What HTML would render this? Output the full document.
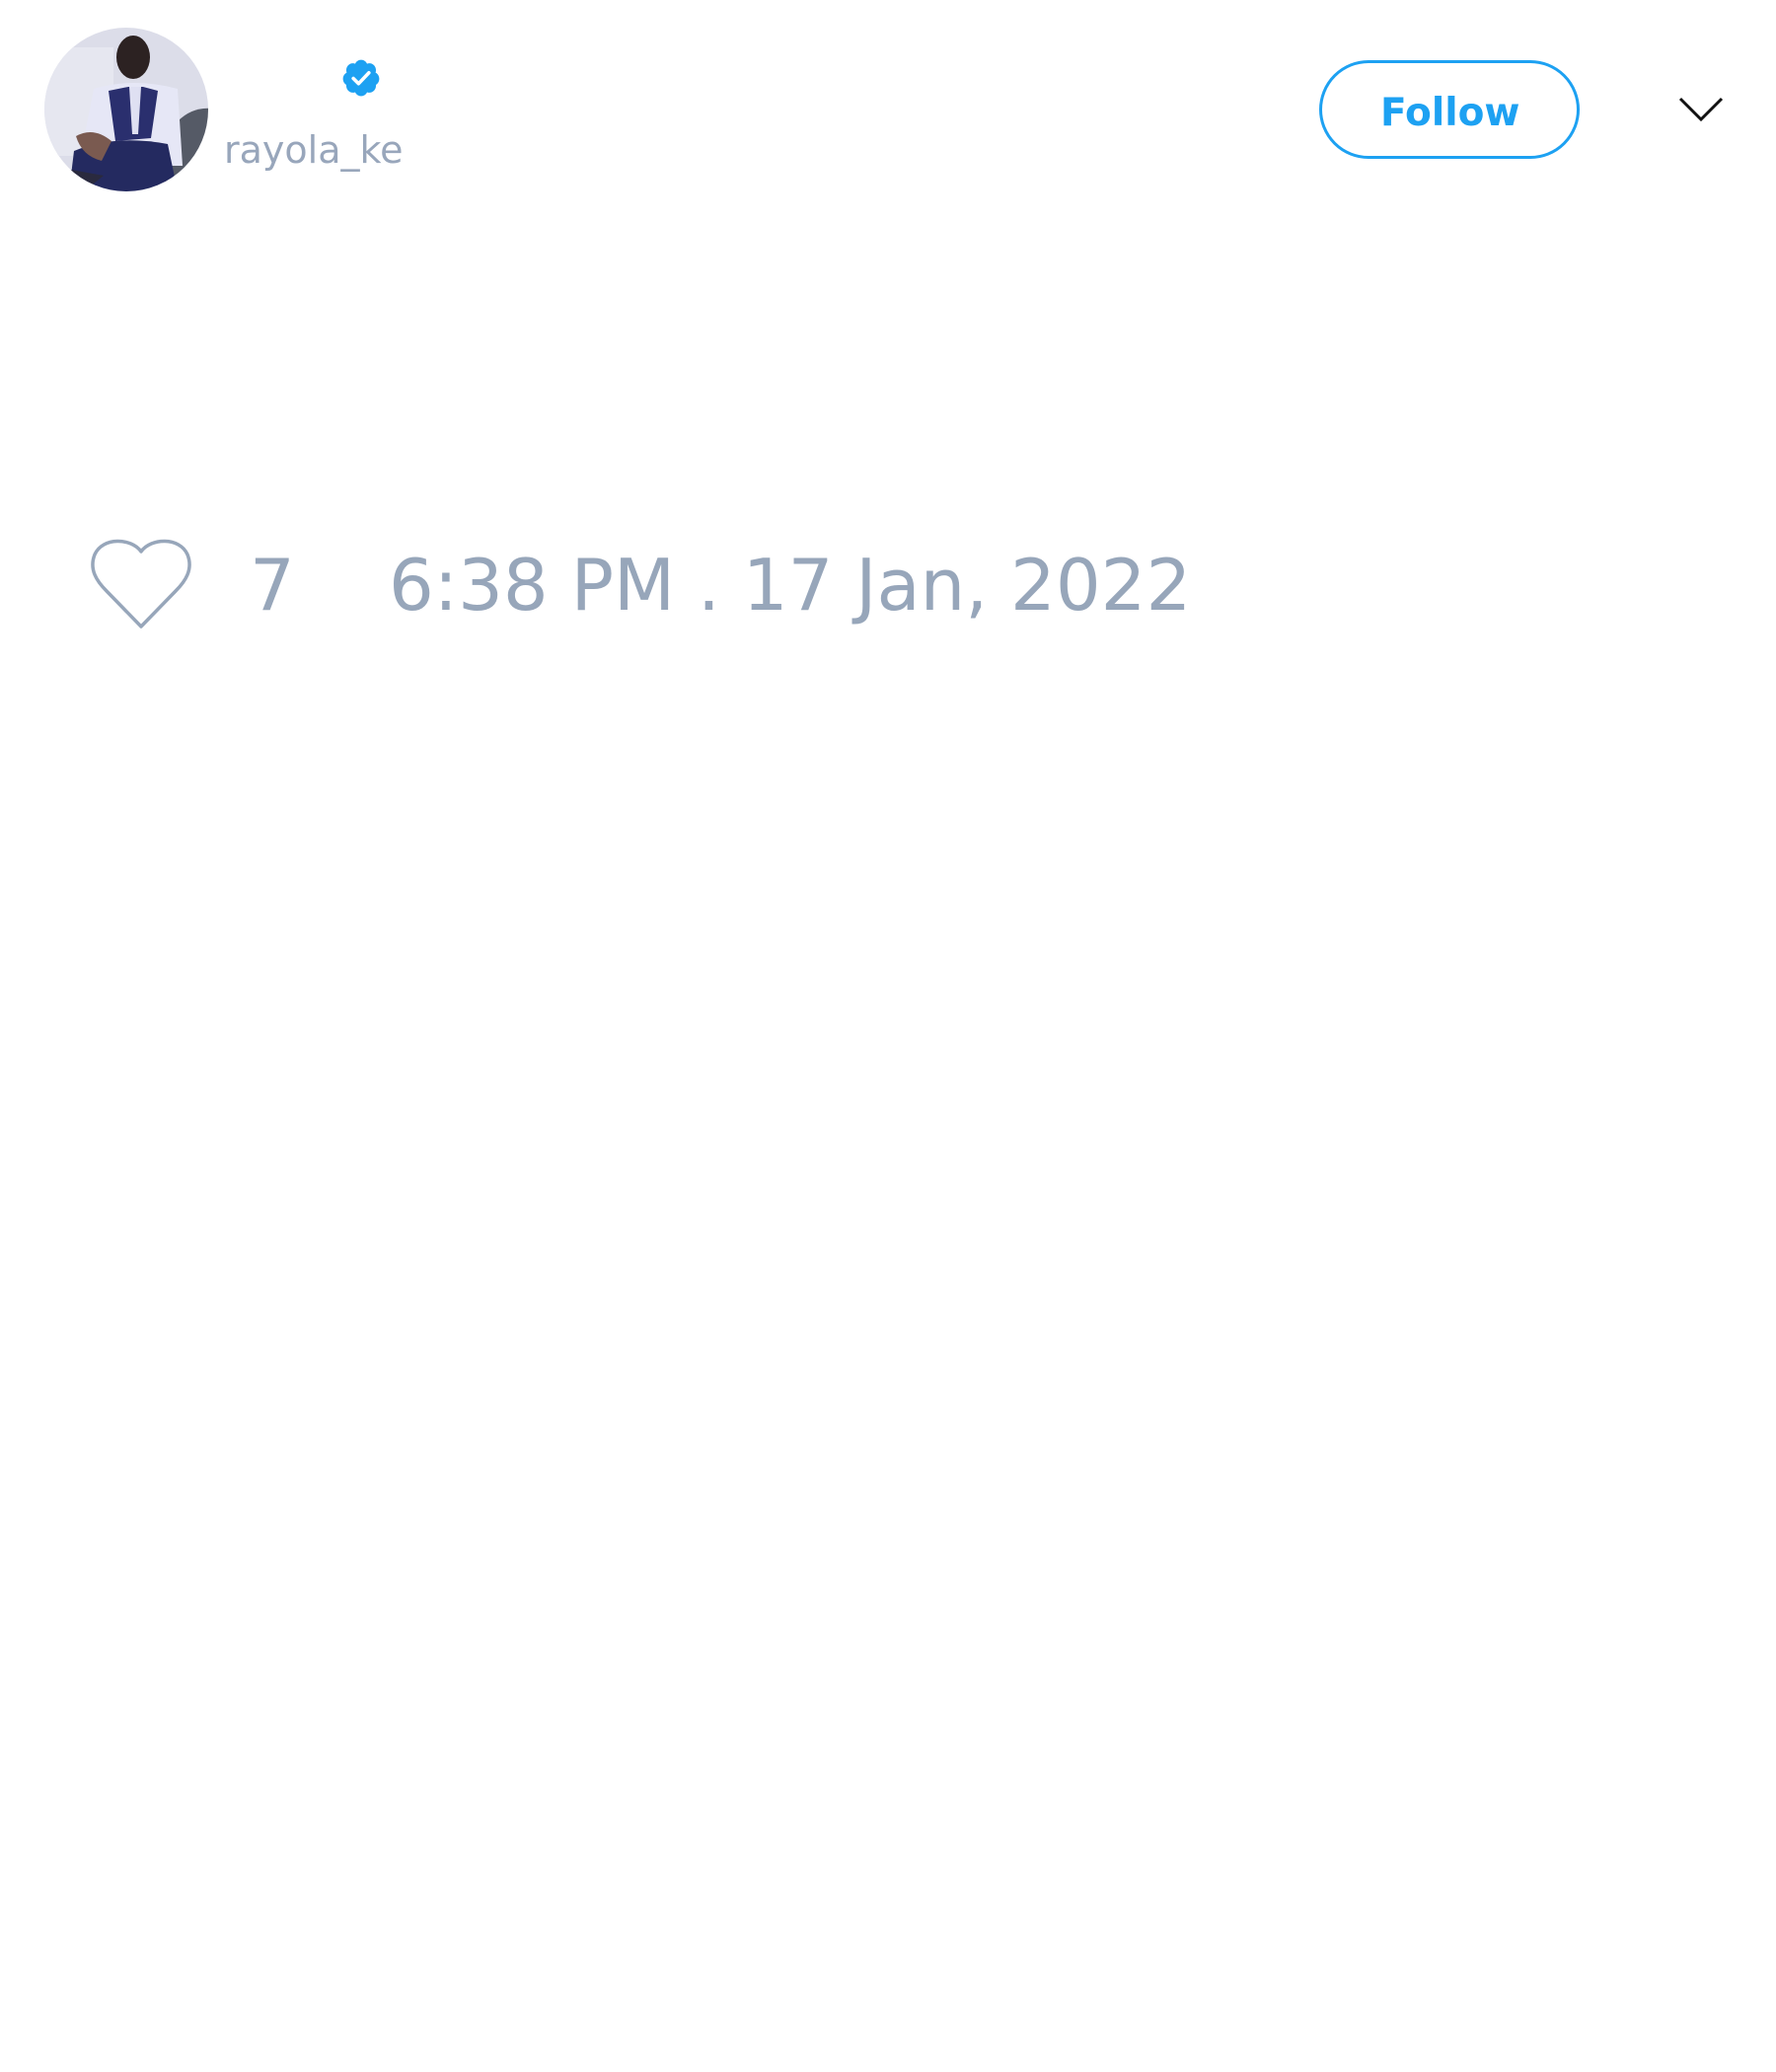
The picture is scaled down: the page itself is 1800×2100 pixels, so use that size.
<!DOCTYPE html>
<html><head><meta charset="utf-8"><style>
html,body{margin:0;padding:0;background:#fff;width:1800px;height:2100px;overflow:hidden;position:relative}
.a{position:absolute}
.u{font-family:"DejaVu Sans",sans-serif;color:#98a6bb;font-size:38px;line-height:1;white-space:nowrap}
.t{font-family:"DejaVu Sans",sans-serif;color:#97a6ba;font-size:72px;line-height:1;white-space:nowrap}
.btn{left:1337px;top:61px;width:258px;height:94px;border:3px solid #1da1f2;border-radius:50px;box-sizing:content-box}
.bt{font-family:"DejaVu Sans",sans-serif;font-weight:bold;color:#1da1f2;font-size:39px;line-height:1;left:1399px;top:95px;white-space:nowrap}
</style></head><body>
<svg class="a" style="left:45px;top:28px" width="166" height="166" viewBox="0 0 166 166">
<defs><clipPath id="c"><circle cx="83" cy="83" r="83"/></clipPath></defs>
<g clip-path="url(#c)">
<rect width="166" height="166" fill="#dcdde9"/>
<rect x="0" y="20" width="70" height="110" fill="#e6e7f0"/>
<path d="M135 95 Q150 80 170 82 L170 166 L120 166Z" fill="#555a66"/>
<ellipse cx="90" cy="30" rx="17" ry="22" fill="#2c2222"/>
<path d="M50 62 Q90 50 135 62 L140 140 L35 140 Z" fill="#e6e7f6"/>
<path d="M65 64 L85 60 L100 60 L115 64 L108 112 L72 115 Z" fill="#2a2f6e"/>
<path d="M86 60 L98 60 L95 108 L89 108 Z" fill="#dfe0f2"/>
<path d="M30 125 Q70 108 125 118 L135 166 L25 166 Z" fill="#242a60"/>
<path d="M32 110 Q50 100 68 115 L58 135 Q38 130 32 110Z" fill="#7a5a50"/>
<path d="M5 140 L60 150 L40 166 L5 166Z" fill="#2a2a3e"/>
</g></svg>
<svg class="a" style="left:345px;top:58px" width="42" height="42" viewBox="0 0 24 24">
<path fill="#1da1f2" d="M22.5 12.5c0-1.580-.875-2.950-2.148-3.600.154-.435.238-.905.238-1.400 0-2.210-1.710-3.998-3.818-3.998-.470 0-.920.084-1.336.250C14.818 2.415 13.510 1.500 12 1.500s-2.816.917-3.437 2.250c-.415-.165-.866-.250-1.336-.250-2.110 0-3.818 1.790-3.818 4 0 .494.083.964.237 1.400-1.272.650-2.147 2.018-2.147 3.600 0 1.495.782 2.798 1.942 3.486-.020.170-.032.340-.032.514 0 2.210 1.708 4 3.818 4 .470 0 .920-.086 1.335-.250.620 1.334 1.926 2.250 3.437 2.250 1.512 0 2.818-.916 3.437-2.250.415.163.865.248 1.336.248 2.110 0 3.818-1.790 3.818-4 0-.174-.012-.344-.033-.513 1.158-.687 1.943-1.990 1.943-3.484z"/>
<path d="M7.5 12.3l3 3 6-6.3" fill="none" stroke="#fff" stroke-width="2" stroke-linecap="round" stroke-linejoin="round"/>
</svg>
<div class="a u" style="left:227px;top:133px">rayola_ke</div>
<div class="a btn"></div>
<div class="a bt">Follow</div>
<svg class="a" style="left:1700px;top:96px" width="48" height="30" viewBox="0 0 48 30">
<path d="M3 4 L24 25 L45 4" fill="none" stroke="#111" stroke-width="3"/>
</svg>
<svg class="a" style="left:88px;top:542px" width="110" height="98" viewBox="0 0 110 98">
<path d="M55 17 C45 3 16 2 8 20 C2 35 10 47 20 57 L55 93 L90 57 C100 47 108 35 102 20 C94 2 65 3 55 17 Z" fill="none" stroke="#97a6ba" stroke-width="3.5" stroke-linejoin="round"/>
</svg>
<div class="a t" style="left:253px;top:557px">7</div>
<div class="a t" style="left:394px;top:557px">6:38 PM . 17 Jan, 2022</div>
</body></html>
